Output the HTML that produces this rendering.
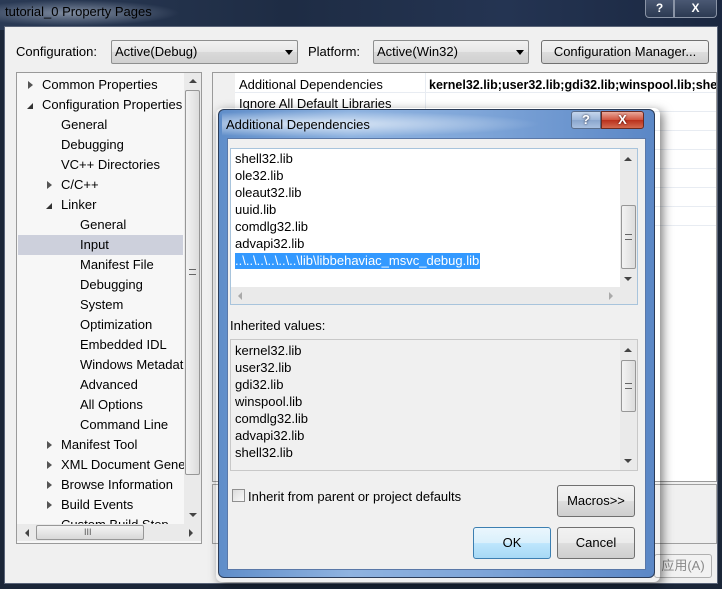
<!DOCTYPE html>
<html><head><meta charset="utf-8"><style>
*{margin:0;padding:0;box-sizing:border-box}
body{width:722px;height:589px;overflow:hidden;background:#1b2638;font-family:"Liberation Sans","Noto Sans CJK SC",sans-serif;font-size:13px;color:#000;position:relative}
.a{position:absolute}
.t{position:absolute;white-space:nowrap;line-height:16px}
.btn{position:absolute;border:1px solid #707070;border-radius:3px;background:linear-gradient(#f2f2f2,#ebebeb 50%,#dddddd 51%,#cfcfcf);text-align:center}
.combo{position:absolute;border:1px solid #8e8f8f;border-radius:2px;background:linear-gradient(#f2f2f2,#e6e6e6 50%,#d9d9d9 51%,#d0d0d0);}
.arr{position:absolute;width:0;height:0;border-left:4px solid transparent;border-right:4px solid transparent;border-top:5px solid #000}
.sbv{position:absolute;background:#eaeaea}
.thumb{position:absolute;border:1px solid #979797;border-radius:2px;background:linear-gradient(90deg,#f3f3f3,#dcdcdc)}
.tri{position:absolute;width:0;height:0}
</style></head><body>
<div class="a" style="left:0;top:0;width:722px;height:30px;background:linear-gradient(90deg,#2a3a55,#1e2c44 40%,#243452 70%,#1a2740)"></div>
<div class="a" style="left:0;top:0;width:180px;height:26px;background:radial-gradient(ellipse at 40% 50%,rgba(200,210,225,.55),rgba(200,210,225,0) 70%)"></div>
<div class="t" style="left:5px;top:4px;font-size:13px;color:#000">tutorial_0 Property Pages</div>
<div class="a" style="left:645px;top:0;width:29px;height:18px;border:1px solid #8a94a6;border-top:none;border-radius:0 0 0 4px;background:linear-gradient(#4a5873,#2c3a52);color:#fff;font-weight:bold;text-align:center;line-height:16px;font-size:12px">?</div>
<div class="a" style="left:674px;top:0;width:43px;height:18px;border:1px solid #8a94a6;border-top:none;border-radius:0 0 4px 0;background:linear-gradient(#4a5873,#2c3a52);color:#fff;font-weight:bold;text-align:center;line-height:16px;font-size:12px">X</div>
<div class="a" style="left:4px;top:26px;width:714px;height:558px;background:#f0f0f0;border:1px solid #5a6478"></div>
<div class="t" style="left:16px;top:44px">Configuration:</div>
<div class="combo" style="left:111px;top:40px;width:187px;height:24px"><div class="t" style="left:3px;top:3px">Active(Debug)</div><div class="arr" style="left:173px;top:9px"></div></div>
<div class="t" style="left:308px;top:44px">Platform:</div>
<div class="combo" style="left:373px;top:40px;width:156px;height:24px"><div class="t" style="left:3px;top:3px">Active(Win32)</div><div class="arr" style="left:142px;top:9px"></div></div>
<div class="btn" style="left:541px;top:40px;width:168px;height:24px;line-height:22px">Configuration Manager...</div>
<div class="a" style="left:16px;top:72px;width:186px;height:472px;border:1px solid #9a9a9a;background:#f7f7f7;overflow:hidden">
<div class="a" style="left:1px;top:162px;width:165px;height:20px;background:#cdd0dc"></div>
<div class="t" style="left:25px;top:4px">Common Properties</div>
<div class="t" style="left:25px;top:24px">Configuration Properties</div>
<div class="t" style="left:44px;top:44px">General</div>
<div class="t" style="left:44px;top:64px">Debugging</div>
<div class="t" style="left:44px;top:84px">VC++ Directories</div>
<div class="t" style="left:44px;top:104px">C/C++</div>
<div class="t" style="left:44px;top:124px">Linker</div>
<div class="t" style="left:63px;top:144px">General</div>
<div class="t" style="left:63px;top:164px">Input</div>
<div class="t" style="left:63px;top:184px">Manifest File</div>
<div class="t" style="left:63px;top:204px">Debugging</div>
<div class="t" style="left:63px;top:224px">System</div>
<div class="t" style="left:63px;top:244px">Optimization</div>
<div class="t" style="left:63px;top:264px">Embedded IDL</div>
<div class="t" style="left:63px;top:284px">Windows Metadata</div>
<div class="t" style="left:63px;top:304px">Advanced</div>
<div class="t" style="left:63px;top:324px">All Options</div>
<div class="t" style="left:63px;top:344px">Command Line</div>
<div class="t" style="left:44px;top:364px">Manifest Tool</div>
<div class="t" style="left:44px;top:384px">XML Document Generator</div>
<div class="t" style="left:44px;top:404px">Browse Information</div>
<div class="t" style="left:44px;top:424px">Build Events</div>
<div class="t" style="left:44px;top:444px">Custom Build Step</div>
<div class="tri" style="left:11px;top:8px;border-top:4px solid transparent;border-bottom:4px solid transparent;border-left:5px solid #555"></div>
<div class="tri" style="left:10px;top:30px;border-left:6px solid transparent;border-bottom:6px solid #333"></div>
<div class="tri" style="left:30px;top:108px;border-top:4px solid transparent;border-bottom:4px solid transparent;border-left:5px solid #555"></div>
<div class="tri" style="left:29px;top:130px;border-left:6px solid transparent;border-bottom:6px solid #333"></div>
<div class="tri" style="left:30px;top:368px;border-top:4px solid transparent;border-bottom:4px solid transparent;border-left:5px solid #555"></div>
<div class="tri" style="left:30px;top:388px;border-top:4px solid transparent;border-bottom:4px solid transparent;border-left:5px solid #555"></div>
<div class="tri" style="left:30px;top:408px;border-top:4px solid transparent;border-bottom:4px solid transparent;border-left:5px solid #555"></div>
<div class="tri" style="left:30px;top:428px;border-top:4px solid transparent;border-bottom:4px solid transparent;border-left:5px solid #555"></div>
<div class="sbv" style="left:167px;top:0;width:17px;height:451px"></div>
<div class="tri" style="left:172px;top:6px;border-left:4px solid transparent;border-right:4px solid transparent;border-bottom:4px solid #444"></div>
<div class="thumb" style="left:168px;top:17px;width:15px;height:385px"></div>
<div class="a" style="left:172px;top:196px;width:7px;height:6px;border-top:1px solid #666;border-bottom:1px solid #666"></div>
<div class="tri" style="left:172px;top:440px;border-left:4px solid transparent;border-right:4px solid transparent;border-top:4px solid #444"></div>
<div class="a" style="left:0;top:451px;width:184px;height:17px;background:#eaeaea"></div>
<div class="tri" style="left:8px;top:456px;border-top:4px solid transparent;border-bottom:4px solid transparent;border-right:4px solid #444"></div>
<div class="thumb" style="left:19px;top:452px;width:108px;height:15px;background:linear-gradient(#f3f3f3,#d8d8d8)"></div>
<div class="t" style="left:67px;top:451px;font-size:9px;color:#555">III</div>
<div class="tri" style="left:172px;top:456px;border-top:4px solid transparent;border-bottom:4px solid transparent;border-left:4px solid #444"></div>
</div>
<div class="a" style="left:212px;top:72px;width:505px;height:410px;border:1px solid #9a9a9a;background:#fff;overflow:hidden">
<div class="a" style="left:0;top:0;width:22px;height:410px;background:#f0f0f0"></div>
<div class="a" style="left:22px;top:19px;width:490px;border-top:1px solid #e8ecf2"></div>
<div class="a" style="left:22px;top:38px;width:490px;border-top:1px solid #e8ecf2"></div>
<div class="a" style="left:22px;top:57px;width:490px;border-top:1px solid #e8ecf2"></div>
<div class="a" style="left:22px;top:76px;width:490px;border-top:1px solid #e8ecf2"></div>
<div class="a" style="left:22px;top:95px;width:490px;border-top:1px solid #e8ecf2"></div>
<div class="a" style="left:22px;top:114px;width:490px;border-top:1px solid #e8ecf2"></div>
<div class="a" style="left:22px;top:133px;width:490px;border-top:1px solid #e8ecf2"></div>
<div class="a" style="left:22px;top:152px;width:490px;border-top:1px solid #e8ecf2"></div>
<div class="a" style="left:212px;top:0;height:410px;border-left:1px solid #e8ecf2"></div>
<div class="t" style="left:26px;top:4px">Additional Dependencies</div>
<div class="t" style="left:216px;top:4px;font-weight:bold;font-size:12.5px">kernel32.lib;user32.lib;gdi32.lib;winspool.lib;shell</div>
<div class="t" style="left:26px;top:23px">Ignore All Default Libraries</div>
</div>
<div class="a" style="left:212px;top:484px;width:505px;height:60px;border:1px solid #a0a0a0;background:#f0f0f0"></div>
<div class="btn" style="left:654px;top:554px;width:58px;height:24px;line-height:22px;color:#888;border-color:#b0b0b0;background:#f2f2f2">应用(A)</div>
<div class="a" style="left:216px;top:108px;width:444px;height:474px;box-shadow:3px 3px 10px rgba(0,0,0,.5);border-radius:6px"></div>
<div class="a" style="left:218px;top:109px;width:437px;height:469px;border:1px solid #2b3c58;border-radius:6px;background:linear-gradient(90deg,#5f8dc9,#8fb3e0 30%,#7ea5d8 60%,#5b87c6)"></div>
<div class="a" style="left:222px;top:111px;width:320px;height:26px;background:radial-gradient(ellipse at 30% 50%,rgba(235,242,250,.85),rgba(235,242,250,0) 70%)"></div>
<div class="t" style="left:226px;top:117px;font-size:13px">Additional Dependencies</div>
<div class="a" style="left:571px;top:111px;width:30px;height:18px;border:1px solid #5a6e8c;border-radius:3px 0 0 3px;background:linear-gradient(#c6d6ec,#9db6d8 50%,#8aa6cd 51%,#a9c0e0);color:#fff;font-weight:bold;text-align:center;line-height:16px;text-shadow:0 0 2px #223">?</div>
<div class="a" style="left:601px;top:111px;width:43px;height:18px;border:1px solid #6b2a20;border-radius:0 3px 3px 0;background:linear-gradient(#e9a99c,#d0523c 50%,#b9301c 51%,#d46a50);color:#fff;font-weight:bold;text-align:center;line-height:16px;text-shadow:0 0 2px #400">X</div>
<div class="a" style="left:227px;top:138px;width:419px;height:432px;background:#f0f0f0;border:1px solid #5a78a8"></div>
<div class="a" style="left:230px;top:148px;width:408px;height:157px;border:1px solid #a8c4dc;background:#fff">
<div class="t" style="left:4px;top:2px">shell32.lib</div>
<div class="t" style="left:4px;top:19px">ole32.lib</div>
<div class="t" style="left:4px;top:36px">oleaut32.lib</div>
<div class="t" style="left:4px;top:53px">uuid.lib</div>
<div class="t" style="left:4px;top:70px">comdlg32.lib</div>
<div class="t" style="left:4px;top:87px">advapi32.lib</div>
<div class="t" style="left:4px;top:104px;background:#3399ff;color:#fff;padding-right:1px">..\..\..\..\..\..\lib\libbehaviac_msvc_debug.lib</div>
<div class="sbv" style="left:389px;top:0;width:17px;height:138px"></div>
<div class="tri" style="left:393px;top:8px;border-left:4px solid transparent;border-right:4px solid transparent;border-bottom:4px solid #444"></div>
<div class="thumb" style="left:390px;top:56px;width:15px;height:64px"></div>
<div class="a" style="left:394px;top:85px;width:7px;height:6px;border-top:1px solid #666;border-bottom:1px solid #666"></div>
<div class="tri" style="left:393px;top:128px;border-left:4px solid transparent;border-right:4px solid transparent;border-top:4px solid #444"></div>
<div class="a" style="left:0;top:138px;width:406px;height:17px;background:#eaeaea"></div>
<div class="tri" style="left:7px;top:143px;border-top:4px solid transparent;border-bottom:4px solid transparent;border-right:4px solid #aaa"></div>
<div class="tri" style="left:378px;top:143px;border-top:4px solid transparent;border-bottom:4px solid transparent;border-left:4px solid #aaa"></div>
</div>
<div class="t" style="left:230px;top:318px">Inherited values:</div>
<div class="a" style="left:230px;top:339px;width:408px;height:132px;border:1px solid #c8c8c8;background:#f0f0f0">
<div class="t" style="left:4px;top:3px">kernel32.lib</div>
<div class="t" style="left:4px;top:20px">user32.lib</div>
<div class="t" style="left:4px;top:37px">gdi32.lib</div>
<div class="t" style="left:4px;top:54px">winspool.lib</div>
<div class="t" style="left:4px;top:71px">comdlg32.lib</div>
<div class="t" style="left:4px;top:88px">advapi32.lib</div>
<div class="t" style="left:4px;top:105px">shell32.lib</div>
<div class="sbv" style="left:389px;top:0;width:17px;height:130px"></div>
<div class="tri" style="left:393px;top:8px;border-left:4px solid transparent;border-right:4px solid transparent;border-bottom:4px solid #444"></div>
<div class="thumb" style="left:390px;top:20px;width:15px;height:52px"></div>
<div class="a" style="left:394px;top:43px;width:7px;height:6px;border-top:1px solid #666;border-bottom:1px solid #666"></div>
<div class="tri" style="left:393px;top:119px;border-left:4px solid transparent;border-right:4px solid transparent;border-top:4px solid #444"></div>
</div>
<div class="a" style="left:232px;top:489px;width:13px;height:13px;border:1px solid #8f8f8f;background:linear-gradient(135deg,#dcdcdc,#fafafa)"></div>
<div class="t" style="left:248px;top:489px">Inherit from parent or project defaults</div>
<div class="btn" style="left:557px;top:485px;width:78px;height:32px;line-height:30px">Macros&gt;&gt;</div>
<div class="btn" style="left:473px;top:527px;width:78px;height:32px;line-height:30px;border-color:#3c7fb1;background:linear-gradient(#eaf6fd,#d9f0fc 50%,#bee6fd 51%,#a7d9f5)">OK</div>
<div class="btn" style="left:557px;top:527px;width:78px;height:32px;line-height:30px">Cancel</div>
</body></html>
